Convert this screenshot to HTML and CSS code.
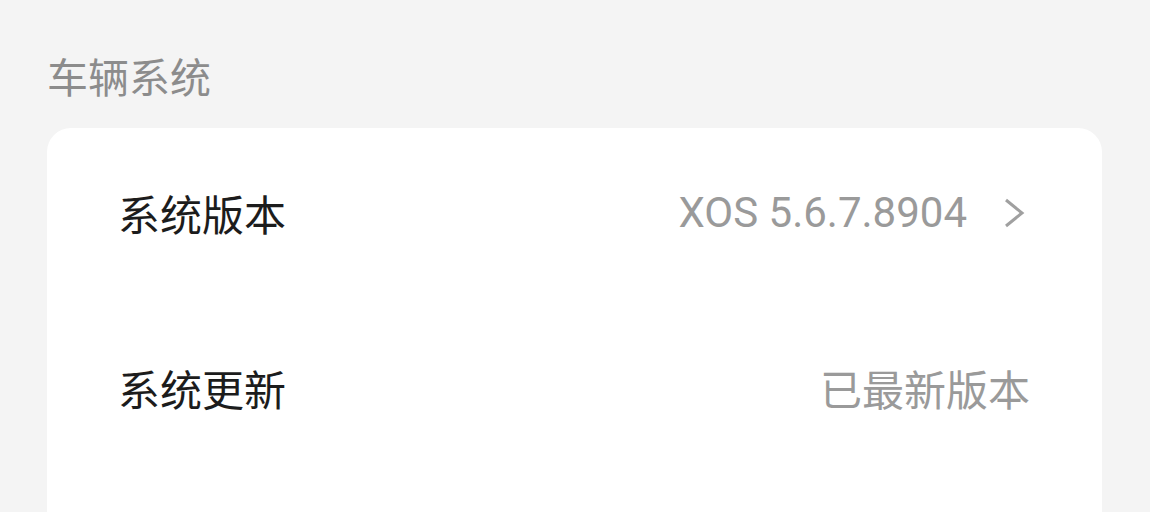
FILE: index.html
```html
<!DOCTYPE html>
<html lang="zh-CN">
<head>
  <meta charset="UTF-8" />
  <meta name="viewport" content="width=device-width, initial-scale=1.0"/>
  <title>车辆系统</title>
  <link rel="stylesheet" href="styles.css">
</head>
<body>

  <div class="page">
    <h2 class="section-title">车辆系统</h2>

    <div class="card">
      <div class="row">
        <span class="row-label">系统版本</span>
        <span class="row-value">
          <span class="version">XOS 5.6.7.8904</span>
          <svg class="chevron" viewBox="0 0 22 32">
            <path d="M3 3 L19 16 L3 29" fill="none" stroke="#a0a0a0" stroke-width="3" stroke-linejoin="miter"/>
          </svg>
        </span>
      </div>

      <div class="row">
        <span class="row-label">系统更新</span>
        <span class="row-value">已最新版本</span>
      </div>

      <div class="row"></div>
    </div>
  </div>

</body>
</html>
```

FILE: styles.css
```css
* {
  box-sizing: border-box;
}

body {
  font-family: "Noto Sans CJK SC", "Noto Sans", sans-serif;
  background: #f4f4f4;
  margin: 0;
  padding: 0;
  overflow: hidden;
}

.page {
  padding: 51px 48px 0 47px;
}

.section-title {
  margin: 0;
  font-size: 41px;
  font-weight: normal;
  line-height: 48px;
  color: #8c8c8c;
}

.card {
  margin-top: 29px;
  background: #ffffff;
  border-radius: 24px;
  padding: 0 72px 0 71px;
}

.row {
  height: 175px;
  padding-bottom: 6px;
  display: flex;
  align-items: center;
  justify-content: space-between;
}

.row-label {
  font-size: 42px;
  color: #1c1c1c;
}

.row-value {
  display: flex;
  align-items: center;
  gap: 36px;
  font-size: 42px;
  color: #9a9a9a;
}

.version {
  font-family: Roboto, "Noto Sans CJK SC", sans-serif;
  font-size: 42px;
}

.chevron {
  width: 22px;
  height: 32px;
  margin-right: 5px;
}
```
